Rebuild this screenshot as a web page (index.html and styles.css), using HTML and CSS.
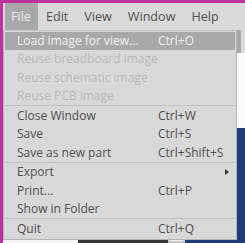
FILE: index.html
```html
<!DOCTYPE html>
<html lang="en">
<head>
  <meta charset="UTF-8">
  <title>Parts Editor - File menu</title>
  <link rel="stylesheet" href="styles.css">
</head>
<body>
  <div class="window">
    <div class="menubar">
      <span class="menubar__item menubar__item--open">File</span>
      <span class="menubar__item">Edit</span>
      <span class="menubar__item">View</span>
      <span class="menubar__item">Window</span>
      <span class="menubar__item">Help</span>
    </div>

    <div class="workspace">
      <div class="workspace__toolbar"></div>
      <div class="workspace__canvas"></div>
      <div class="workspace__lower">
        <div class="workspace__status">
          <span class="status__light"></span>
          <span class="status__dark"></span>
          <span class="status__box"></span>
        </div>
      </div>
    </div>

    <div class="menu">
      <div class="menu__item menu__item--active"><span>Load image for view...</span><span>Ctrl+O</span></div>
      <div class="menu__item menu__item--disabled"><span>Reuse breadboard image</span><span></span></div>
      <div class="menu__item menu__item--disabled"><span>Reuse schematic image</span><span></span></div>
      <div class="menu__item menu__item--disabled"><span>Reuse PCB image</span><span></span></div>
      <div class="menu__sep"></div>
      <div class="menu__item"><span>Close Window</span><span>Ctrl+W</span></div>
      <div class="menu__item"><span>Save</span><span>Ctrl+S</span></div>
      <div class="menu__item"><span>Save as new part</span><span>Ctrl+Shift+S</span></div>
      <div class="menu__sep"></div>
      <div class="menu__item"><span>Export</span><span class="menu__arrow"></span></div>
      <div class="menu__item"><span>Print...</span><span>Ctrl+P</span></div>
      <div class="menu__item"><span>Show in Folder</span><span></span></div>
      <div class="menu__sep"></div>
      <div class="menu__item"><span>Quit</span><span>Ctrl+Q</span></div>
    </div>
  </div>
</body>
</html>
```

FILE: styles.css
```css
html {
  box-sizing: border-box;
  background: #c2309e;
}

*, *:before, *:after {
  box-sizing: inherit;
}

body {
  margin: 0;
  font-family: 'Open Sans', sans-serif;
  font-size: 12px;
}

.window {
  position: relative;
  height: 243px;
  display: flex;
  flex-direction: column;
  border-top: 3px solid #c2309e;
  border-left: 3px solid #c2309e;
  border-top-left-radius: 4px;
  background: #dadada;
  overflow: hidden;
}

/* Menu bar */
.menubar {
  display: flex;
  height: 27px;
  padding-left: 2px;
  align-items: stretch;
  color: #505050;
  font-size: 12.6px;
}

.menubar__item {
  display: flex;
  align-items: center;
  padding: 0 8px;
}

.menubar__item--open {
  background: #a9a9a9;
  color: #ececec;
  padding: 0 7px 0 6px;
}

/* Stuff behind the menu */
.workspace {
  flex: 1;
  display: flex;
  flex-direction: column;
}

.workspace__toolbar {
  height: 23px;
  background: #a9a9a9;
  border-right: 4px solid #dadada;
}

.workspace__canvas {
  height: 75px;
  background: #fafafa;
  border-left: 1px solid #b0b0b0;
}

.workspace__lower {
  flex: 1;
  display: flex;
  align-items: flex-end;
  background: #1f3c78;
}

.workspace__status {
  display: flex;
  height: 20px;
}

.status__light {
  width: 75px;
  background: #f4f4f4;
}

.status__dark {
  width: 90px;
  background: #363636;
}

.status__box {
  width: 17px;
  background: #f4f4f4;
  border: 2px solid #c8c8c8;
}

/* Dropdown */
.menu {
  position: absolute;
  left: 0;
  top: 27px;
  width: 234px;
  padding: 0 1px 1px;
  background: #d9d9d9;
  border: 1px solid #b4b4b4;
  border-top-color: #c4c4c4;
  color: #505050;
}

.menu__item {
  display: grid;
  grid-template-columns: 141px 1fr;
  height: 18.5px;
  align-items: center;
  padding-left: 12px;
  white-space: nowrap;
}

.menu__item--active {
  background: #a9a9a9;
  color: #f0f0f0;
  box-shadow: inset 0 1px 0 #d9d9d9;
}

.menu__item--disabled {
  color: #bababa;
}

.menu__sep {
  height: 1px;
  background: #c3c3c3;
}

.menu__arrow {
  justify-self: end;
  margin-right: 6px;
  width: 0;
  height: 0;
  border-top: 3px solid transparent;
  border-bottom: 3px solid transparent;
  border-left: 4px solid #3a3a3a;
}
```
